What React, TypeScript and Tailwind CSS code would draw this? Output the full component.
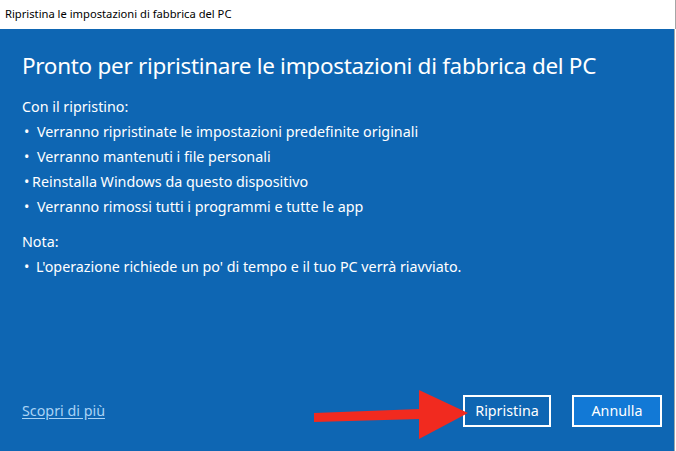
import React from "react";

export default function App() {
  const font = { fontFamily: '"Noto Sans", "Open Sans", sans-serif' };
  return (
    <div className="relative w-[676px] h-[451px] flex flex-col bg-white overflow-hidden" style={font}>
      <div className="h-[29px] flex items-center pl-[5px] pr-[2px] border-r border-[#a6a6a6] text-[11.2px] text-black">
        <span className="mt-[-1px]">Ripristina le impostazioni di fabbrica del PC</span>
      </div>
      <div className="flex-1 flex">
        <div className="w-[674px] bg-[#0e66b3] flex flex-col pl-[22px] pr-[12px] pt-[21px] pb-[24px] text-white">
          <h1 className="text-[22.5px] leading-[32px] font-normal tracking-[-0.3px]">Pronto per ripristinare le impostazioni di fabbrica del PC</h1>
          <div className="mt-[12px] text-[14.3px] leading-[25px]">
            <div>Con il ripristino:</div>
            <div className="flex"><span className="w-[15px] pl-[2px]">•</span><span>Verranno ripristinate le impostazioni predefinite originali</span></div>
            <div className="flex"><span className="w-[15px] pl-[2px]">•</span><span>Verranno mantenuti i file personali</span></div>
            <div className="flex"><span className="w-[10px] pl-[2px]">•</span><span>Reinstalla Windows da questo dispositivo</span></div>
            <div className="flex"><span className="w-[15px] pl-[2px]">•</span><span>Verranno rimossi tutti i programmi e tutte le app</span></div>
            <div className="mt-[10px]">Nota:</div>
            <div className="flex"><span className="w-[14px] pl-[2px]">•</span><span>L'operazione richiede un po' di tempo e il tuo PC verrà riavviato.</span></div>
          </div>
          <div className="mt-auto flex items-center">
            <span className="text-[14.3px] text-[#a9d3f5] underline underline-offset-[2px]">Scopri di più</span>
            <div className="ml-auto flex gap-[21px]">
              <button className="w-[88px] h-[32px] border-2 border-white bg-[#0e66b3] text-[14.3px] text-white">Ripristina</button>
              <button className="w-[90px] h-[32px] border-2 border-white bg-[#1279d6] text-[14.3px] text-white">Annulla</button>
            </div>
          </div>
        </div>
        <div className="w-px bg-[#a6a6a6]" />
        <div className="flex-1 bg-white" />
      </div>
      <svg className="absolute left-0 top-0 pointer-events-none" width="676" height="451" viewBox="0 0 676 451">
        <polygon points="314,413 420,409 420,419 314,422" fill="#f12a1f" />
        <polygon points="419,390 468,413 419,439" fill="#f12a1f" />
      </svg>
    </div>
  );
}
